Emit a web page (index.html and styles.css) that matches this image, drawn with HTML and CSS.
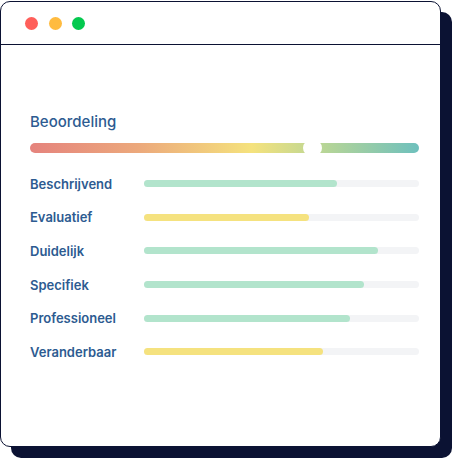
FILE: index.html
```html
<!DOCTYPE html>
<html lang="nl">
<head>
    <meta charset="UTF-8">
    <meta name="viewport" content="width=device-width, initial-scale=1.0">
    <title>Beoordeling</title>
    <link rel="stylesheet" href="styles.css">
</head>
<body>
    <div class="window">
        <div class="titlebar">
            <span class="dot red"></span>
            <span class="dot orange"></span>
            <span class="dot green"></span>
        </div>
        <div class="content">
            <h2 class="title">Beoordeling</h2>
            <div class="scale">
                <span class="marker" style="left: 273px;"></span>
            </div>
            <div class="rows">
                <div class="row">
                    <span class="label">Beschrijvend</span>
                    <div class="track"><div class="fill green-fill" style="width: 70%;"></div></div>
                </div>
                <div class="row">
                    <span class="label">Evaluatief</span>
                    <div class="track"><div class="fill yellow-fill" style="width: 60%;"></div></div>
                </div>
                <div class="row">
                    <span class="label">Duidelijk</span>
                    <div class="track"><div class="fill green-fill" style="width: 85%;"></div></div>
                </div>
                <div class="row">
                    <span class="label">Specifiek</span>
                    <div class="track"><div class="fill green-fill" style="width: 80%;"></div></div>
                </div>
                <div class="row">
                    <span class="label">Professioneel</span>
                    <div class="track"><div class="fill green-fill" style="width: 75%;"></div></div>
                </div>
                <div class="row">
                    <span class="label">Veranderbaar</span>
                    <div class="track"><div class="fill yellow-fill" style="width: 65%;"></div></div>
                </div>
            </div>
        </div>
    </div>
</body>
</html>
```

FILE: styles.css
```css
html, body {
    height: 458px;
}

body {
    margin: 0;
    background: #ffffff;
    font-family: Inter, "Noto Sans", sans-serif;
}

.window {
    margin-top: 1px;
    width: 439px;
    height: 444px;
    border: 1px solid #0b1233;
    border-radius: 10px;
    background: #ffffff;
    box-shadow: 11px 11px 0 #0b1233;
    overflow: hidden;
}

.titlebar {
    height: 42px;
    border-bottom: 1px solid #0b1233;
    display: flex;
    align-items: center;
    gap: 10.5px;
    padding-left: 24px;
}

.dot {
    width: 13px;
    height: 13px;
    border-radius: 50%;
}

.dot.red {
    background: #ff5f5a;
}

.dot.orange {
    background: #ffbb3f;
}

.dot.green {
    background: #04c94f;
}

.content {
    padding: 68px 21px 0 29px;
}

.title {
    margin: 0;
    font-size: 15px;
    line-height: 18px;
    font-weight: 500;
    color: #2d5b91;
}

.scale {
    position: relative;
    margin-top: 12px;
    height: 10px;
    border-radius: 5px;
    background: linear-gradient(90deg, #e5837d 0%, #eca97c 28%, #f5e27d 57%, #b6d597 76%, #6ec0bd 100%);
}

.marker {
    position: absolute;
    top: -3px;
    width: 19px;
    height: 16px;
    border-radius: 8px;
    background: #ffffff;
}

.rows {
    margin-top: 14px;
}

.row {
    display: flex;
    align-items: center;
    height: 33.6px;
}

.label {
    width: 114px;
    font-size: 13px;
    font-weight: 600;
    color: #2d5b91;
}

.track {
    flex: 1;
    height: 7px;
    border-radius: 4px;
    background: #f3f4f6;
}

.fill {
    height: 100%;
    border-radius: 4px;
}

.green-fill {
    background: #b2e4cc;
}

.yellow-fill {
    background: #f5e27f;
}
```
